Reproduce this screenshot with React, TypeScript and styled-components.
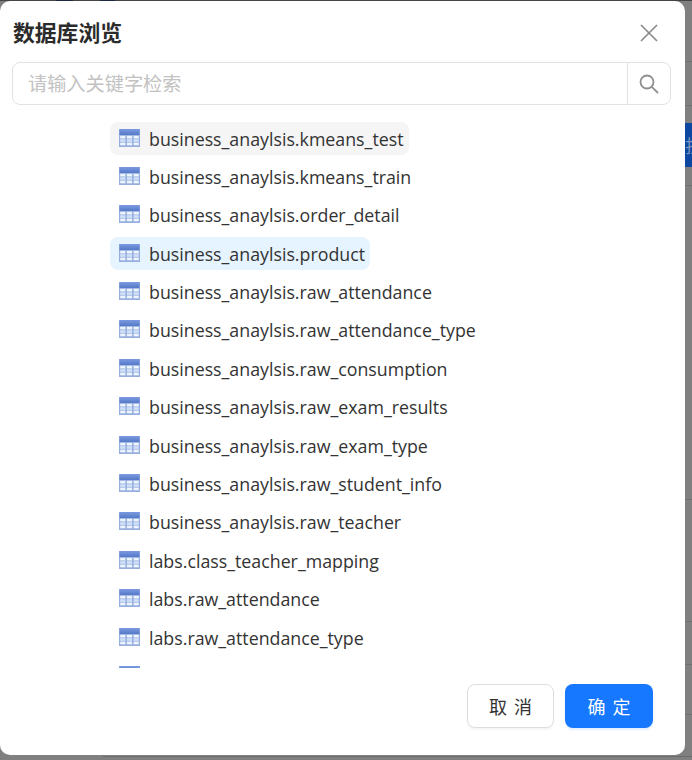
import React from "react";
import styled, { createGlobalStyle } from "styled-components";

const Global = createGlobalStyle`
  html, body { margin: 0; padding: 0; background: #808080; }
  #root { width: 692px; height: 760px; overflow: hidden; }
`;
const Page = styled.div`
  width: 692px; height: 760px; display: flex; flex-direction: column; background: #808080; overflow: hidden;
  font-family: "Open Sans", "Noto Sans CJK SC", sans-serif;
`;
const TopEdge = styled.div`
  height: 1px; flex: none;
  background: linear-gradient(90deg, #444 56px, #1d2a44 56px, #1d2a44 73px, #444 73px, #444 100px, #1d2a44 100px, #1d2a44 115px, #444 115px);
`;
const Body = styled.div`height: 754px; flex: none; display: flex;`;
const BottomEdge = styled.div`
  flex: 1;
  background: linear-gradient(180deg, #808080 1px, #6c6c6c 1px, #6c6c6c 2px, #808080 2px);
  margin-left: 103px;
`;
const Dialog = styled.div`
  width: 685px; height: 754px; flex: none; background: #fff;
  border-radius: 10px; display: flex; flex-direction: column; overflow: hidden;
`;
const Strip = styled.div`
  flex: 1; padding-top: 122px;
  background: linear-gradient(180deg,
    #808080 60px, #707070 60px, #707070 61px, #808080 61px,
    #808080 104px, #707070 104px, #707070 105px, #808080 105px,
    #808080 184px, #707070 184px, #707070 185px, #808080 185px,
    #808080 498px, #707070 498px, #707070 499px, #808080 499px,
    #808080 620px, #707070 620px, #707070 621px, #808080 621px,
    #808080 663px, #707070 663px, #707070 664px, #808080 664px,
    #808080 713px, #707070 713px, #707070 714px, #808080 714px);
`;
const BlueBlock = styled.div`
  height: 44px; background: #0c47a1; color: #7f94bd; font: 18px/44px "Noto Sans CJK SC", sans-serif;
  overflow: hidden; white-space: nowrap;
`;
const Header = styled.div`
  height: 61px; flex: none; display: flex; align-items: center; justify-content: space-between;
  padding: 1px 27px 0 13px; box-sizing: border-box;
`;
const Title = styled.div`
  font: 700 21.8px/30px "Noto Sans CJK SC", sans-serif; color: #2b2b2b;
`;
const Close = styled.svg`width: 18px; height: 18px; margin-top: 2px; stroke: #8a8a8a; stroke-width: 1.7; fill: none;`;
const Search = styled.div`
  height: 43px; margin: 0 14px 0 12px; flex: none; box-sizing: border-box; display: flex;
  border: 1px solid #e2e2e2; border-radius: 8px;
`;
const Placeholder = styled.div`
  flex: 1; padding-left: 15px; font: 19.2px/41px "Noto Sans CJK SC", sans-serif; color: #c2c2c2;
`;
const SearchBtn = styled.div`
  width: 42px; border-left: 1px solid #e2e2e2; display: flex; align-items: center; justify-content: center;
`;
const SearchIcon = styled.svg`width: 20px; height: 20px; stroke: #8f8f8f; stroke-width: 1.8; fill: none;`;
const List = styled.div`
  height: 563px; flex: none; overflow: hidden; padding: 17px 0 0 110px; box-sizing: border-box;
  display: flex; flex-direction: column; gap: 5.4px; align-items: flex-start;
`;
const Row = styled.div<{ $state?: "hover" | "selected" }>`
  height: 33px; flex: none; display: flex; align-items: center; gap: 9px; padding: 0 5px 0 9px;
  border-radius: 8px; font-size: 17.8px; color: #333; white-space: nowrap;
  background: ${(p) => (p.$state === "hover" ? "#f5f5f5" : p.$state === "selected" ? "#e6f4ff" : "transparent")};
`;
const RowIcon = styled.svg`flex: none; margin-bottom: 2px;`;
const Footer = styled.div`
  flex: 1; display: flex; justify-content: flex-end; gap: 11px; padding: 16px 32px 0 0;
`;
const Button = styled.div<{ $primary?: boolean }>`
  width: ${(p) => (p.$primary ? 88 : 87)}px; height: 44px; box-sizing: border-box; border-radius: 8px;
  display: flex; align-items: center; justify-content: center; letter-spacing: 7px; padding-left: 7px;
  font: 400 18px "Noto Sans CJK SC", sans-serif;
  border: ${(p) => (p.$primary ? "none" : "1px solid #dedede")};
  background: ${(p) => (p.$primary ? "#1677ff" : "#fff")};
  color: ${(p) => (p.$primary ? "#fff" : "#333")};
  box-shadow: ${(p) => (p.$primary ? "0 2px 2px rgba(22,119,255,.12)" : "0 2px 2px rgba(0,0,0,.04)")};
`;

const TableIcon = () => (
  <RowIcon width="21" height="18" viewBox="0 0 21 18">
    <defs>
      <linearGradient id="band" x1="0" y1="0" x2="0" y2="1">
        <stop offset="0" stopColor="#7b9ae0" />
        <stop offset="1" stopColor="#5579c8" />
      </linearGradient>
    </defs>
    <rect width="21" height="18" fill="#95aedd" />
    <rect x="0.5" y="0" width="20" height="6" fill="url(#band)" />
    {[6.8, 10.2, 13.6].map((y, r) =>
      [1.2, 7.9, 14.6].map((x) => (
        <rect key={`${x}-${y}`} x={x} y={y} width="5.2" height="2.7" fill={r === 1 ? "#cfe0f8" : "#eef4fd"} />
      ))
    )}
  </RowIcon>
);

const rows = [
  "business_anaylsis.kmeans_test", "business_anaylsis.kmeans_train", "business_anaylsis.order_detail",
  "business_anaylsis.product", "business_anaylsis.raw_attendance", "business_anaylsis.raw_attendance_type",
  "business_anaylsis.raw_consumption", "business_anaylsis.raw_exam_results", "business_anaylsis.raw_exam_type",
  "business_anaylsis.raw_student_info", "business_anaylsis.raw_teacher", "labs.class_teacher_mapping",
  "labs.raw_attendance", "labs.raw_attendance_type", "labs.raw_consumption",
];

export default function App() {
  return (
    <Page>
      <Global />
      <TopEdge />
      <Body>
        <Dialog>
          <Header>
            <Title>数据库浏览</Title>
            <Close viewBox="0 0 18 18"><path d="M1 1l16 16M17 1L1 17" /></Close>
          </Header>
          <Search>
            <Placeholder>请输入关键字检索</Placeholder>
            <SearchBtn>
              <SearchIcon viewBox="0 0 20 20"><circle cx="8" cy="8" r="6.5" /><path d="M12.8 12.8l6.2 6.2" /></SearchIcon>
            </SearchBtn>
          </Search>
          <List>
            {rows.map((r, i) => (
              <Row key={r} $state={i === 0 ? "hover" : i === 3 ? "selected" : undefined}>
                <TableIcon />
                {r}
              </Row>
            ))}
          </List>
          <Footer>
            <Button>取消</Button>
            <Button $primary>确定</Button>
          </Footer>
        </Dialog>
        <Strip><BlueBlock>折</BlueBlock></Strip>
      </Body>
      <BottomEdge />
    </Page>
  );
}
